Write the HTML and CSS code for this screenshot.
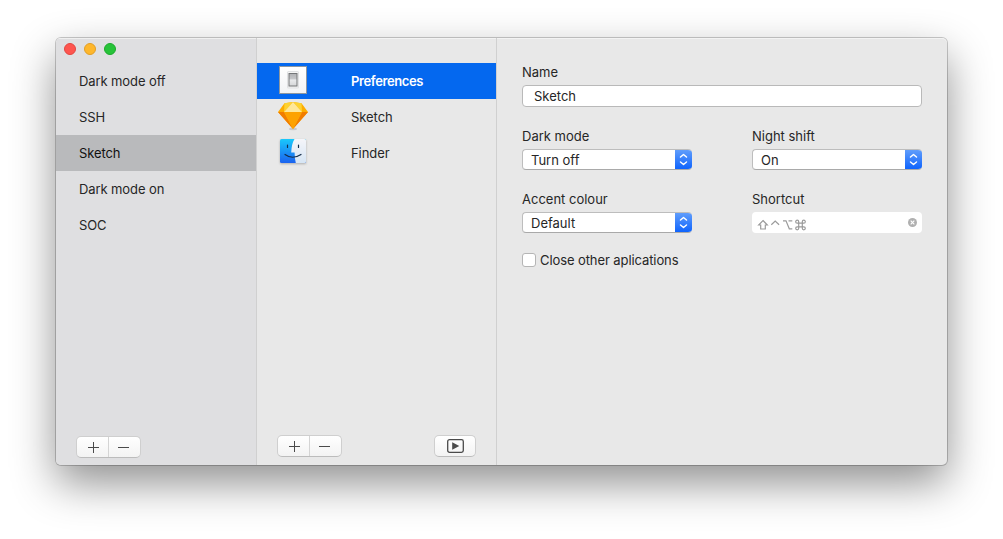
FILE: index.html
```html
<!DOCTYPE html>
<html lang="en">
<head>
<meta charset="utf-8">
<title>Modes</title>
<link rel="stylesheet" href="styles.css">
</head>
<body>
<main class="window">
  <aside class="sidebar">
    <div class="lights"><i class="light close"></i><i class="light minimise"></i><i class="light expand"></i></div>
    <ul class="modes">
      <li>Dark mode off</li>
      <li>SSH</li>
      <li class="current">Sketch</li>
      <li>Dark mode on</li>
      <li>SOC</li>
    </ul>
    <div class="segment">
      <button aria-label="Add mode"><svg width="11" height="11"><path d="M5.500 0V11M0 5.500H11"/></svg></button>
      <button aria-label="Remove mode"><svg width="11" height="11"><path d="M0 5.500H11"/></svg></button>
    </div>
  </aside>

  <section class="apps">
    <ul class="app-list">
      <li class="selected">
        <svg class="app-icon" width="32" height="32" viewBox="0 0 32 32">
          <defs>
            <linearGradient id="plate" x2="0" y2="1"><stop stop-color="#fff"/><stop offset="1" stop-color="#f2f3f5"/></linearGradient>
            <linearGradient id="rocker" x2="0" y2="1"><stop stop-color="#b0b1b4"/><stop offset=".45" stop-color="#c6c7ca"/><stop offset=".5" stop-color="#e9eaec"/><stop offset="1" stop-color="#d5d6d8"/></linearGradient>
          </defs>
          <path fill="#8f979f" d="M2 1h28v28H2z"/>
          <path fill="url(#plate)" d="M3 2h26v26H3z"/>
          <rect x="10" y="6" width="12" height="17.500" rx="1.500" fill="#e0e1e3"/>
          <rect x="11" y="7" width="10" height="15.500" fill="#f4f4f4"/>
          <rect x="12" y="8.500" width="8" height="12.500" fill="url(#rocker)" stroke="#747679"/>
        </svg>
        <span>Preferences</span>
      </li>
      <li>
        <svg class="app-icon" width="32" height="32" viewBox="0 0 32 32">
          <ellipse cx="16" cy="29" rx="4" ry="1.200" fill="#aaa" opacity=".5"/>
          <path fill="#fdad00" d="M7.500 3.200 16 2l8.500 1.200L31 12 16 29 1 12z"/>
          <path fill="#fdd231" d="M7.500 3.200 16 2 7 12z"/>
          <path fill="#fdd231" d="M24.500 3.200 16 2l9 10z"/>
          <path fill="#fee79a" d="M16 2 7 12h18z"/>
          <path fill="#f17c00" d="M1 12h6l9 17zM31 12h-6l-9 17z"/>
          <path fill="#fda200" d="M7 12h18l-9 17z"/>
        </svg>
        <span>Sketch</span>
      </li>
      <li>
        <svg class="app-icon finder" width="32" height="32" viewBox="0 0 32 32">
          <defs>
            <linearGradient id="face" x2="0" y2="1"><stop stop-color="#19c9fb"/><stop offset="1" stop-color="#1b62ef"/></linearGradient>
            <linearGradient id="profile" x2="0" y2="1"><stop stop-color="#f5f5f9"/><stop offset="1" stop-color="#d6e5f4"/></linearGradient>
          </defs>
          <rect x="3" y="3" width="26" height="24" rx="1.500" fill="url(#face)"/>
          <path fill="url(#profile)" d="M17.500 3H27.500Q29 3 29 4.500V25.500Q29 27 27.500 27H18.800Q17.600 22 17.600 16.500H14.200Q14.500 8 17.500 3z"/>
          <path d="M10.500 9v2.500M21.500 9v2.500M8 18.500Q15.500 24 24 18.500" fill="none" stroke="#142d4a" stroke-width="1.200" stroke-linecap="round"/>
        </svg>
        <span>Finder</span>
      </li>
    </ul>
    <div class="app-actions">
      <div class="segment">
        <button aria-label="Add app"><svg width="11" height="11"><path d="M5.500 0V11M0 5.500H11"/></svg></button>
        <button aria-label="Remove app"><svg width="11" height="11"><path d="M0 5.500H11"/></svg></button>
      </div>
      <div class="segment run">
        <button aria-label="Run"><svg width="17" height="14" viewBox="0 0 17 14"><rect x=".7" y=".7" width="15.600" height="12.600" rx="1.800" class="frame"/><path class="play" d="M5.200 3.300 12.300 7 5.200 10.700z"/></svg></button>
      </div>
    </div>
  </section>

  <section class="details">
    <div class="field wide">
      <label>Name</label>
      <div class="input">Sketch</div>
    </div>
    <div class="field">
      <label>Dark mode</label>
      <div class="select"><span>Turn off</span><b><svg width="9" height="13"><path d="M1.500 4 4.500 1.500 7.500 4M1.500 9 4.500 11.500 7.500 9"/></svg></b></div>
    </div>
    <div class="field">
      <label>Night shift</label>
      <div class="select"><span>On</span><b><svg width="9" height="13"><path d="M1.500 4 4.500 1.500 7.500 4M1.500 9 4.500 11.500 7.500 9"/></svg></b></div>
    </div>
    <div class="field">
      <label>Accent colour</label>
      <div class="select"><span>Default</span><b><svg width="9" height="13"><path d="M1.500 4 4.500 1.500 7.500 4M1.500 9 4.500 11.500 7.500 9"/></svg></b></div>
    </div>
    <div class="field">
      <label>Shortcut</label>
      <div class="shortcut">
        <svg class="keys" width="50" height="12" viewBox="0 0 50 12">
          <path d="M6 1.500 10.300 6H8.300V10H3.700V6H1.700z"/>
          <path d="M14.300 5.700 18.200 2 22.100 5.700"/>
          <path d="M26 1.800H29L32.300 9.800H35.300M31.500 1.800H35.300"/>
          <path d="M41.700 4.200h3.600v3.600h-3.600zM41.700 4.200H40.200a1.500 1.500 0 1 1 1.500-1.500zM45.300 4.200V2.700a1.500 1.500 0 1 1 1.500 1.500zM45.300 7.800h1.500a1.500 1.500 0 1 1-1.500 1.500zM41.700 7.800v1.500a1.500 1.500 0 1 1-1.500-1.500z"/>
        </svg>
        <svg width="9" height="9" viewBox="0 0 9 9"><circle cx="4.500" cy="4.500" r="4.500" fill="#b0b0b0"/><path d="M2.700 2.700 6.300 6.300M6.300 2.700 2.700 6.300" stroke="#fff" stroke-width="1.100"/></svg>
      </div>
    </div>
    <div class="check wide"><i class="box"></i><span>Close other aplications</span></div>
  </section>
</main>
</body>
</html>
```

FILE: styles.css
```css
* { box-sizing: border-box; }

body {
  margin: 0;
  height: 539px;
  padding: 38px 56px;
  overflow: hidden;
  background: #fff;
  color: #262626;
  font: 13px/16px Inter, "Liberation Sans", sans-serif;
}

ul { list-style: none; margin: 0; padding: 0; }

.window {
  display: grid;
  grid-template-columns: 201px 240px 1fr;
  width: 891px;
  height: 427px;
  overflow: hidden;
  border-radius: 5px;
  background: #e8e8e8;
  box-shadow: inset 0 1px #f3f3f3, 0 0 0 1px rgba(0, 0, 0, .2), 0 18px 44px rgba(0, 0, 0, .44);
}

.sidebar, .apps {
  display: flex;
  flex-direction: column;
  border-right: 1px solid #d0d0d0;
}

.sidebar { background: #dfdfe1; box-shadow: inset 0 1px #f0f0f0; }

.lights { display: flex; gap: 8px; height: 25px; padding: 5px 0 0 8px; }
.light { width: 12px; height: 12px; border-radius: 50%; border: 1px solid; }
.close { background: #fe554f; border-color: #e24640; }
.minimise { background: #feb72c; border-color: #e19e25; }
.expand { background: #27c339; border-color: #1caa2b; }

.modes li { height: 36px; padding: 10px 0 0 23px; letter-spacing: -.1px; }
.modes .current { background: #b9babc; color: #111; }

.segment {
  display: flex;
  width: 65px;
  height: 22px;
  border: 1px solid #cfcfcf;
  border-bottom-color: #bcbcbc;
  border-radius: 5px;
  background: linear-gradient(#fff, #f3f3f3);
}
.segment button {
  display: flex;
  flex: 1;
  align-items: center;
  justify-content: center;
  padding: 0;
  border: 0;
  background: none;
}
.segment button:first-child:not(:last-child) { flex: 0 0 31px; padding-left: 2px; }
.segment button + button { padding-right: 3px; border-left: 1px solid #d4d4d4; }
.segment svg { display: block; stroke: #4a4a4a; stroke-width: 1; }
.sidebar .segment { margin: auto 0 7px 20px; }
.run { width: 42px; }
.segment .frame { fill: none; stroke-width: 1.300; }
.segment .play { fill: #4a4a4a; stroke: none; }

.app-list { padding-top: 25px; }
.app-list li { display: flex; height: 36px; padding-left: 20px; }
.app-list span { margin: 10px 0 0 42px; letter-spacing: -.05px; }
.app-icon { display: block; margin-top: 1px; }
.finder { filter: drop-shadow(0 1px 1px rgba(0, 0, 0, .25)); }
.selected { background: #0468ef; color: #fff; font-weight: 600; }
.app-list .selected span { letter-spacing: -.38px; }
.selected .app-icon { margin-top: 2px; }
.app-actions { display: flex; justify-content: space-between; margin: auto 20px 8px; }

.details {
  display: grid;
  grid-template-columns: 170px 170px;
  column-gap: 60px;
  row-gap: 21px;
  align-content: start;
  padding: 26px 25px 0;
}
.wide { grid-column: 1 / 3; }
.field label { display: block; margin-bottom: 5px; }
.input {
  height: 22px;
  padding: 2px 11px;
  border: 1px solid #b9b9b9;
  border-radius: 4px;
  background: #fff;
}
.select {
  display: flex;
  justify-content: space-between;
  height: 21px;
  overflow: hidden;
  border: 1px solid #bdbdbd;
  border-bottom-color: #a9a9a9;
  border-right: 0;
  border-radius: 4px;
  background: #fff;
}
.select span { padding: 2px 0 0 8px; }
.select b {
  display: flex;
  align-items: center;
  justify-content: center;
  width: 17px;
  height: 21px;
  margin-top: -1px;
  background: linear-gradient(#64a0fb, #0b61fd);
}
.select svg { fill: none; stroke: #fff; stroke-width: 1.500; stroke-linecap: round; stroke-linejoin: round; }
.shortcut {
  display: flex;
  align-items: center;
  justify-content: space-between;
  height: 21px;
  padding: 0 5px;
  border-radius: 4px;
  background: #fff;
}
.keys { margin-top: 4px; fill: none; stroke: #9b9b9b; stroke-width: 1.200; }
.check { display: flex; align-items: center; gap: 4px; margin-top: -2px; letter-spacing: -.09px; }
.box { width: 14px; height: 14px; border: 1px solid #b5b5b5; border-radius: 3px; background: #fff; }
```
